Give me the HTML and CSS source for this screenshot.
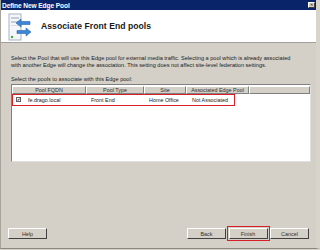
FILE: index.html
```html
<!DOCTYPE html>
<html lang="en">
<head>
  <meta charset="UTF-8">
  <title>Define New Edge Pool</title>
  <link rel="stylesheet" href="styles.css">
</head>
<body>
  <div class="window">
    <div class="titlebar">
      <span class="titlebar-text">Define New Edge Pool</span>
      <span class="close-btn">&#x2715;</span>
    </div>

    <div class="header">
      <svg class="header-icon" width="24" height="28" viewBox="0 0 24 28">
        <rect x="1" y="1" width="12" height="26" fill="#f4f6fa" stroke="#a9b2c2" stroke-width="1"/>
        <rect x="3" y="4" width="8" height="2" fill="#c5ccd8"/>
        <rect x="3" y="8" width="8" height="2" fill="#c5ccd8"/>
        <rect x="3" y="12" width="8" height="1" fill="#d6dbe4"/>
        <circle cx="4" cy="24" r="1.2" fill="#3cae3c"/>
        <path d="M8 10 L13 6 L13 8.5 L22 8.5 L22 11.5 L13 11.5 L13 14 Z" fill="#3e86d6" stroke="#2a66b2" stroke-width="0.6"/>
        <path d="M23 19 L18 15 L18 17.5 L9 17.5 L9 20.5 L18 20.5 L18 23 Z" fill="#3e86d6" stroke="#2a66b2" stroke-width="0.6"/>
      </svg>
      <h1 class="header-title">Associate Front End pools</h1>
    </div>

    <div class="content">
      <p class="desc">Select the Pool that will use this Edge pool for external media traffic. Selecting a pool which is already associated with another Edge will change the association. This setting does not affect site-level federation settings.</p>
      <p class="list-label">Select the pools to associate with this Edge pool:</p>

      <div class="pool-list">
        <div class="list-header">
          <span class="col col-fqdn">Pool FQDN</span>
          <span class="col col-type">Pool Type</span>
          <span class="col col-site">Site</span>
          <span class="col col-edge">Associated Edge Pool</span>
          <span class="col col-rest"></span>
        </div>
        <div class="list-row">
          <span class="cell cell-fqdn"><span class="checkbox">&#x2714;</span>fe.drago.local</span>
          <span class="cell cell-type">Front End</span>
          <span class="cell cell-site">Home Office</span>
          <span class="cell cell-edge">Not Associated</span>
        </div>
      </div>
    </div>

    <div class="footer">
      <button class="btn">Help</button>
      <div class="footer-right">
        <button class="btn">Back</button>
        <span class="highlight"><button class="btn">Finish</button></span>
        <button class="btn">Cancel</button>
      </div>
    </div>
  </div>
</body>
</html>
```

FILE: styles.css
```css
* {
  margin: 0;
  padding: 0;
  box-sizing: border-box;
}

body {
  width: 320px;
  height: 250px;
  overflow: hidden;
  font-family: "Liberation Sans", Arial, sans-serif;
  background: #d4d0c8;
}

.window {
  width: 320px;
  height: 249px;
  display: flex;
  flex-direction: column;
  background: #d4d0c8;
  border-left: 1px solid #a8a49c;
  border-right: 4px solid #d8d4cc;
  border-bottom: 1px solid #8c8880;
}

.titlebar {
  height: 10px;
  background: #0a246a;
  display: flex;
  align-items: center;
  justify-content: space-between;
  padding: 0 1px 0 1px;
}

.titlebar-text {
  color: #ffffff;
  font-size: 6.6px;
  font-weight: bold;
  letter-spacing: -0.1px;
}

.close-btn {
  width: 7px;
  height: 6px;
  background: #d4d0c8;
  border: 1px solid #ffffff;
  border-right-color: #404040;
  border-bottom-color: #404040;
  font-size: 4px;
  line-height: 4px;
  text-align: center;
  color: #000000;
}

.header {
  height: 33px;
  background: #ffffff;
  display: flex;
  align-items: center;
  padding-left: 7px;
  gap: 9px;
  border-bottom: 1px solid #a0a0a0;
}

.header-icon {
  flex: none;
  margin-top: 1px;
}

.header-title {
  font-size: 8.6px;
  font-weight: bold;
  color: #1a1a1a;
  letter-spacing: 0.05px;
}

.content {
  padding: 12px 7px 0 10px;
  flex: 1;
}

.desc {
  font-size: 5.6px;
  line-height: 6.5px;
  color: #202020;
  padding-right: 9px;
}

.list-label {
  font-size: 5.6px;
  line-height: 6.5px;
  color: #202020;
  margin-top: 8px;
}

.pool-list {
  margin-top: 1px;
  width: 300px;
  height: 78px;
  background: #ffffff;
  border: 1px solid #808080;
  border-right-color: #e0e0e0;
  border-bottom-color: #e0e0e0;
  padding: 1px 0 0 0;
}

.list-header {
  display: flex;
  height: 8px;
}

.col {
  background: #d4d0c8;
  border-right: 1px solid #808080;
  border-bottom: 1px solid #808080;
  border-top: 1px solid #ffffff;
  border-left: 1px solid #ffffff;
  font-size: 5.4px;
  line-height: 6px;
  text-align: center;
  color: #303030;
}

.col-fqdn { width: 74px; }
.col-type { width: 58px; }
.col-site { width: 42px; }
.col-edge { width: 63px; }
.col-rest { flex: 1; }

.list-row {
  display: flex;
  align-items: center;
  width: 223px;
  height: 12px;
  border: 1.5px solid #d81e26;
}

.cell {
  font-size: 5.4px;
  color: #202020;
  white-space: nowrap;
}

.cell-fqdn {
  width: 76px;
  display: flex;
  align-items: center;
  gap: 7px;
  padding-left: 3px;
}

.checkbox {
  width: 5px;
  height: 5px;
  border: 0.6px solid #606060;
  font-size: 4px;
  line-height: 4px;
  text-align: center;
  color: #000000;
}

.cell-type { width: 58px; padding-left: 2px; }
.cell-site { width: 43px; padding-left: 2px; }
.cell-edge { padding-left: 2px; }

.footer {
  display: flex;
  justify-content: space-between;
  align-items: center;
  padding: 0 7px 7px 7px;
}

.footer-right {
  display: flex;
  align-items: center;
  gap: 3px;
}

.btn {
  width: 39px;
  height: 11px;
  background: #d4d0c8;
  border: 1px solid #ffffff;
  border-right-color: #404040;
  border-bottom-color: #404040;
  font-family: "Liberation Sans", Arial, sans-serif;
  font-size: 5.4px;
  color: #303030;
}

.highlight {
  display: flex;
  border: 1.5px solid #d81e26;
  padding: 1px;
  margin: 0 -2.5px;
}
```
